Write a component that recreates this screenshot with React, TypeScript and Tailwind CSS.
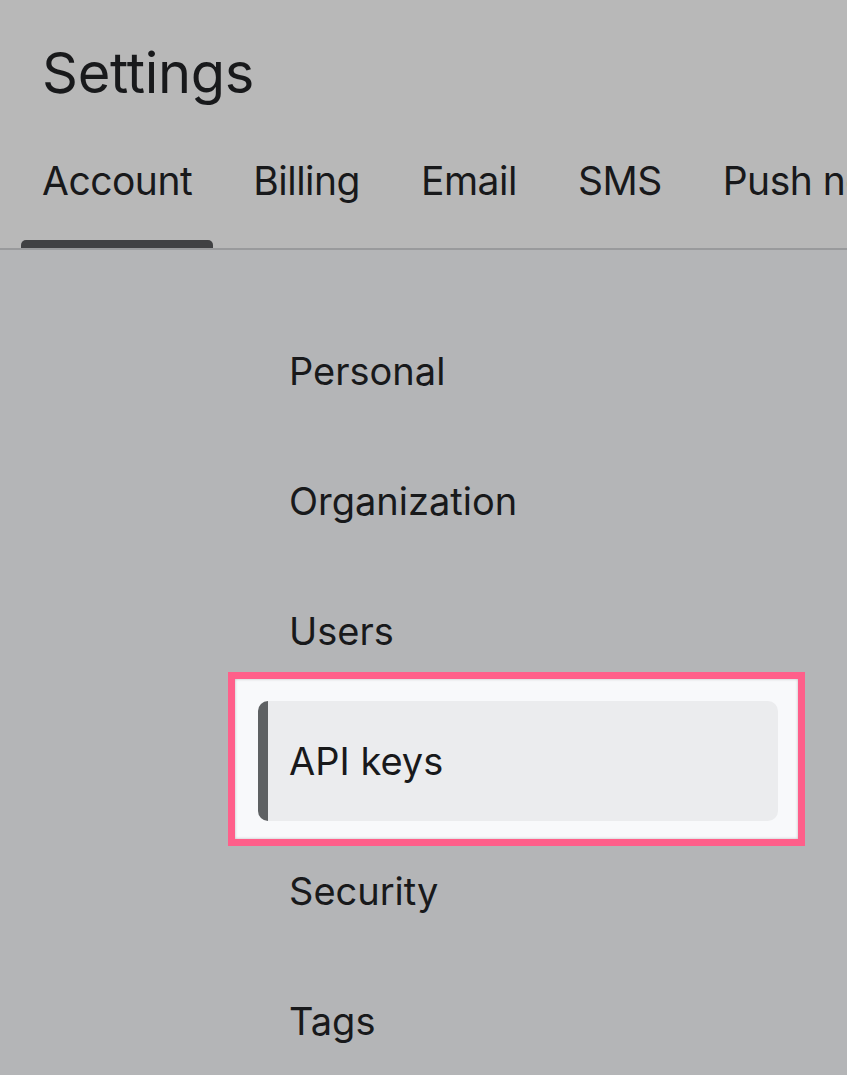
const tabs = ["Account", "Billing", "Email", "SMS", "Push notifications"];
const items = ["Personal", "Organization", "Users", "API keys", "Security", "Tags"];

export default function App() {
  const active = "API keys";
  return (
    <div
      className="min-h-[1075px] w-[847px] overflow-hidden bg-[#b4b5b7] text-[#18191b]"
      style={{ fontFamily: "Inter, 'Noto Sans', sans-serif" }}
    >
      <header className="bg-[#b8b8b8]">
        <h1 className="px-[42px] pt-[40px] text-[56px] leading-[66px] tracking-[-0.3px]">Settings</h1>
        <nav className="mt-[51px] flex gap-[19px] overflow-hidden whitespace-nowrap border-b-2 border-[#999a9c] px-[21px]">
          {tabs.map((t) => (
            <div key={t} className="relative px-[21px] pb-[43px] text-[39px] leading-[48px] tracking-[-0.5px]">
              {t}
              {t === "Account" && (
                <span className="absolute -bottom-[2px] left-0 right-0 h-[10px] rounded-t-[5px] bg-[#404143]" />
              )}
            </div>
          ))}
        </nav>
      </header>

      <ul className="flex flex-col gap-[10px] pt-[61px] pl-[258px] pr-[69px]">
        {items.map((it) =>
          it === active ? (
            <li key={it} className="relative">
              <div className="absolute -left-[30px] -right-[27px] -top-[29px] -bottom-[25px] border-[7px] border-[#ff5f8a] bg-[#f8f9fb] shadow-[inset_0_0_3px_rgba(0,0,0,0.25)]" />
              <div className="relative flex h-[120px] items-center rounded-[10px] border-l-[10px] border-[#5e6163] bg-[#ebecee] pl-[21px] text-[38px]">
                {it}
              </div>
            </li>
          ) : (
            <li key={it} className="flex h-[120px] items-center pl-[31px] text-[38px]">
              {it}
            </li>
          )
        )}
      </ul>
    </div>
  );
}
